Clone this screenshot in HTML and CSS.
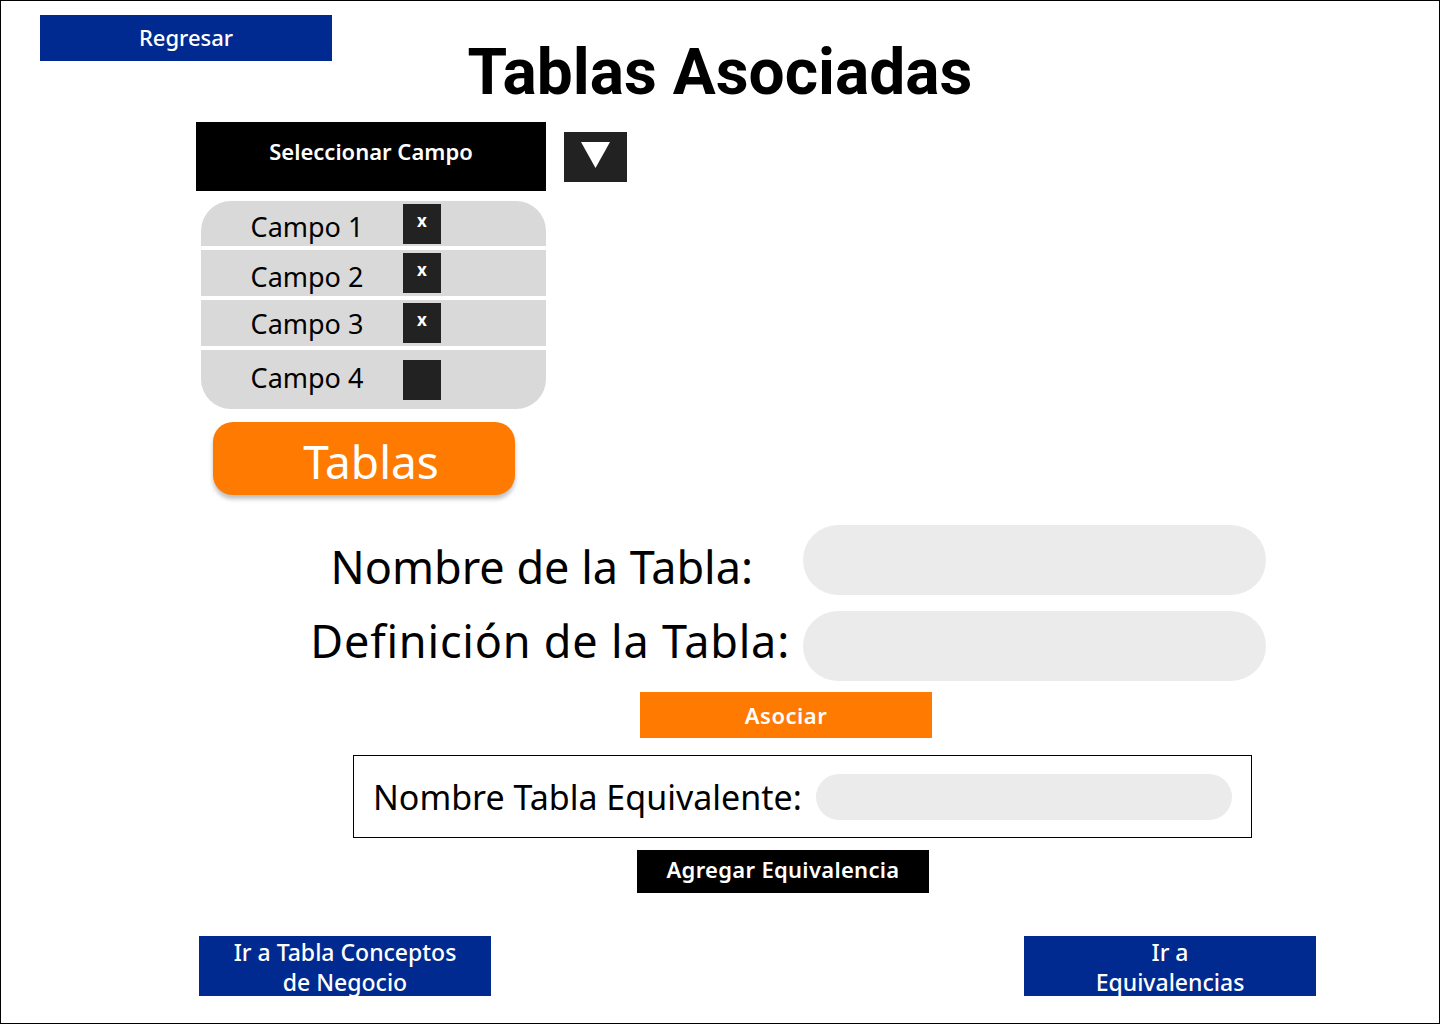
FILE: index.html
```html
<!DOCTYPE html>
<html lang="es">
<head>
<meta charset="utf-8">
<title>Tablas Asociadas</title>
<link rel="stylesheet" href="styles.css">
</head>
<body>
<div class="frame">
  <header class="header">
    <button class="btn btn-blue back">Regresar</button>
    <h1 class="title">Tablas Asociadas</h1>
  </header>

  <section class="picker">
    <div class="picker-col">
      <div class="select">Seleccionar Campo</div>
      <div class="list">
        <div class="list-row r1"><span class="campo">Campo 1</span><span class="xbox">x</span></div>
        <div class="list-row r2"><span class="campo">Campo 2</span><span class="xbox">x</span></div>
        <div class="list-row r3"><span class="campo">Campo 3</span><span class="xbox">x</span></div>
        <div class="list-row r4"><span class="campo">Campo 4</span><span class="xbox"></span></div>
      </div>
      <button class="tablas">Tablas</button>
    </div>
    <div class="dropdown">
      <svg width="63" height="50" viewBox="0 0 63 50"><polygon points="17,10 46,10 31.5,36" fill="#fff"/></svg>
    </div>
  </section>

  <section class="form">
    <div class="form-row">
      <label class="label label-nombre">Nombre de la Tabla:</label>
      <div class="pill"></div>
    </div>
    <div class="form-row row-def">
      <label class="label label-def">Definición de la Tabla:</label>
      <div class="pill"></div>
    </div>
  </section>

  <button class="btn btn-orange asociar">Asociar</button>

  <div class="equiv">
    <span class="equiv-label">Nombre Tabla Equivalente:</span>
    <div class="pill pill-small"></div>
  </div>

  <button class="btn btn-black agregar">Agregar Equivalencia</button>

  <footer class="footer">
    <button class="btn btn-blue foot foot-left">Ir a Tabla Conceptos<br>de Negocio</button>
    <button class="btn btn-blue foot foot-right">Ir a<br>Equivalencias</button>
  </footer>
</div>
</body>
</html>
```

FILE: styles.css
```css
* { box-sizing: border-box; }
html, body { margin: 0; padding: 0; background: #fff; }
body { font-family: "Noto Sans", "DejaVu Sans", sans-serif; color: #000; }

.frame {
  width: 1440px;
  height: 1024px;
  border: 1px solid #000;
  display: flex;
  flex-direction: column;
  align-items: flex-start;
  overflow: hidden;
}

.btn {
  border: 0;
  padding: 0;
  margin: 0;
  color: #fff;
  font-family: "Noto Sans", sans-serif;
  font-size: 22px;
  font-weight: 500;
  width: 292px;
  display: flex;
  align-items: center;
  justify-content: center;
  text-align: center;
}
.btn-blue { background: #002a8f; }
.btn-orange { background: #ff7a00; font-weight: 600; }
.btn-black { background: #000; font-weight: 600; }

.header {
  width: 100%;
  height: 121px;
  display: grid;
  grid-template-columns: 1fr auto 1fr;
  flex: none;
}
.back {
  margin: 14px 0 0 39px;
  height: 46px;
  align-self: start;
  justify-self: start;
  padding-bottom: 2px;
}
.title {
  margin: 40px 0 0;
  font-family: Roboto, "Noto Sans", sans-serif;
  font-weight: 700;
  font-size: 64px;
  line-height: 64px;
  letter-spacing: 0;
}

.picker {
  display: flex;
  align-items: flex-start;
  gap: 18px;
  margin-left: 195px;
}
.picker-col {
  width: 350px;
  display: flex;
  flex-direction: column;
  align-items: flex-start;
}
.select {
  width: 350px;
  height: 69px;
  background: #000;
  color: #fff;
  font-size: 22px;
  font-weight: 600;
  display: flex;
  align-items: center;
  justify-content: center;
  padding-bottom: 12px;
}
.dropdown {
  margin-top: 10px;
  width: 63px;
  height: 50px;
  background: #222;
}
.dropdown svg { display: block; }

.list {
  margin: 10px 0 0 5px;
  width: 345px;
  height: 208px;
  border-radius: 30px;
  overflow: hidden;
  display: flex;
  flex-direction: column;
  gap: 4px;
}
.list-row {
  background: #d9d9d9;
  display: grid;
  grid-template-columns: 202px 38px;
  align-items: center;
}
.r1 { height: 45px; }
.r2 { height: 46px; }
.r3 { height: 46px; }
.r4 { height: 59px; }
.campo {
  font-size: 27px;
  text-align: center;
  padding-left: 10px;
  padding-top: 6px;
  line-height: 1;
}
.r3 .campo { padding-top: 1px; }
.r4 .campo { padding-top: 0; padding-bottom: 4px; }
.xbox {
  width: 38px;
  height: 40px;
  background: #222;
  color: #fff;
  font-size: 17px;
  font-weight: 700;
  text-align: center;
  line-height: 34px;
}

.tablas {
  margin: 13px 0 0 17px;
  width: 302px;
  height: 73px;
  border: 0;
  border-radius: 20px;
  background: #ff7a00;
  box-shadow: 0 4px 4px rgba(0, 0, 0, 0.25);
  color: #fff;
  font-family: "Noto Sans", sans-serif;
  font-size: 46px;
  padding: 4px 0 0 14px;
}

.form {
  margin-top: 30px;
  display: flex;
  flex-direction: column;
  gap: 16px;
}
.form-row {
  display: grid;
  grid-template-columns: 802px 463px;
  align-items: center;
}
.label {
  font-size: 45px;
  text-align: right;
  line-height: 1;
  white-space: nowrap;
}
.label-nombre { padding-right: 50px; padding-top: 12px; }
.label-def { padding-right: 13px; padding-bottom: 12px; letter-spacing: 0.8px; }
.pill {
  width: 463px;
  height: 70px;
  border-radius: 35px;
  background: #ebebeb;
}

.asociar {
  margin: 11px 0 0 639px;
  height: 46px;
  font-size: 22px;
  letter-spacing: 0.5px;
}

.equiv {
  margin: 17px 0 0 352px;
  width: 899px;
  height: 83px;
  border: 1px solid #000;
  display: flex;
  align-items: center;
  justify-content: space-between;
  padding: 0 19px;
}
.equiv-label { font-size: 34px; line-height: 1; padding-top: 0; }
.pill-small { width: 416px; height: 46px; border-radius: 23px; }

.agregar {
  margin: 12px 0 0 636px;
  height: 43px;
  padding-bottom: 6px;
  font-size: 22px;
  letter-spacing: 0.3px;
}

.footer {
  margin-top: 43px;
  width: 100%;
  display: flex;
}
.foot {
  height: 60px;
  line-height: 30px;
  font-size: 23px;
  align-items: flex-start;
  padding-top: 1px;
}
.foot-left { margin-left: 198px; }
.foot-right { margin-left: auto; margin-right: 123px; }
```
